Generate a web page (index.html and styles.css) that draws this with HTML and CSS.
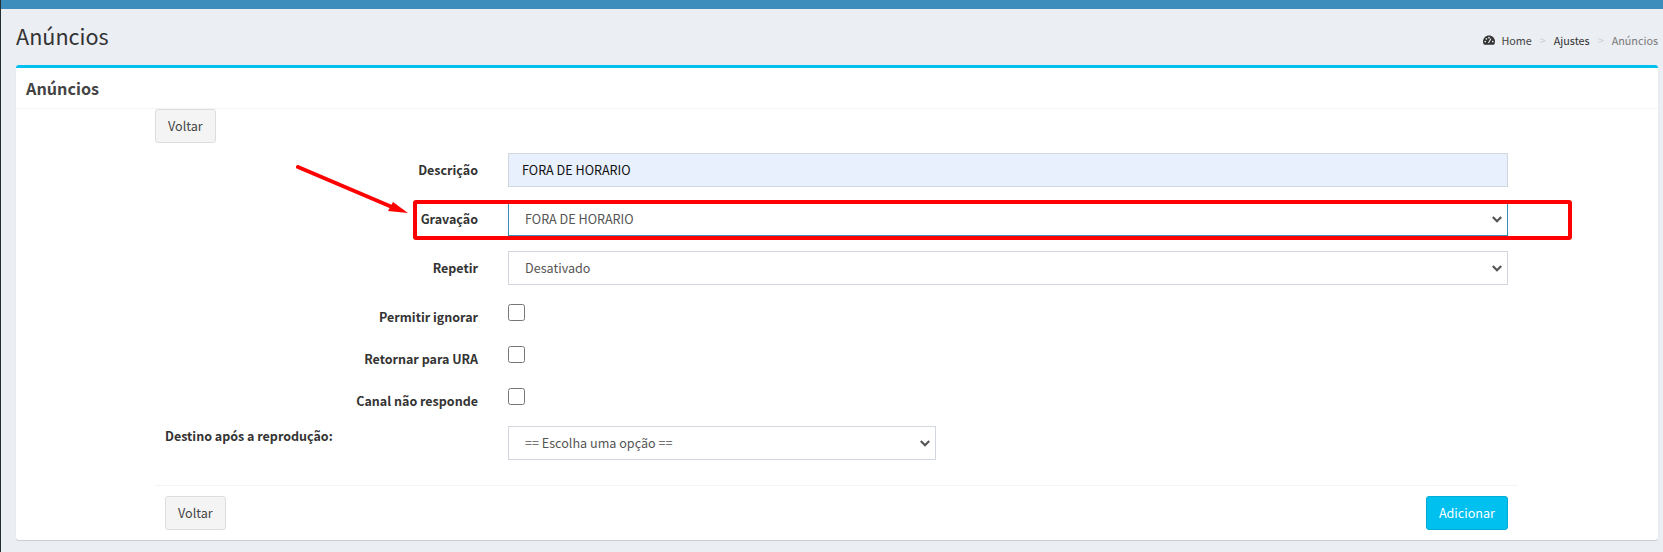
FILE: index.html
```html
<!DOCTYPE html>
<html lang="pt-BR">
<head>
<meta charset="utf-8">
<title>Anúncios</title>
<link rel="stylesheet" href="styles.css">
</head>
<body>
<div class="topbar"></div>
<main class="content">
  <header class="page-head">
    <h1 class="page-title">Anúncios</h1>
    <nav class="crumbs">
      <svg class="gauge" viewBox="0 0 24 20" aria-hidden="true">
        <path class="gauge-dome" d="M12 1C5.400 1 0 6.400 0 13c0 2.200.6 4.300 1.700 6.100.2.300.5.500.9.500h18.800c.4 0 .7-.2.9-.5C23.400 17.300 24 15.200 24 13 24 6.400 18.600 1 12 1z"/>
        <circle class="gauge-mark" cx="4.500" cy="13" r="1.700"/>
        <circle class="gauge-mark" cx="6.800" cy="7.600" r="1.700"/>
        <circle class="gauge-mark" cx="12" cy="5.300" r="1.700"/>
        <circle class="gauge-mark" cx="19.500" cy="13" r="1.700"/>
        <path class="gauge-needle" d="M11 16l5-9"/>
      </svg>
      <a class="crumb">Home</a><span class="sep">&gt;</span><a class="crumb crumb-dark">Ajustes</a><span class="sep">&gt;</span><span class="crumb crumb-active">Anúncios</span>
    </nav>
  </header>

  <section class="box">
    <h2 class="box-title">Anúncios</h2>
    <div class="box-body">
      <button class="btn top-back" type="button">Voltar</button>
      <form class="form">
        <div class="row">
          <label class="label">Descrição</label>
          <input class="control autofilled" type="text" value="FORA DE HORARIO">
        </div>
        <div class="row">
          <label class="label">Gravação</label>
          <select class="control picker focused"><option>FORA DE HORARIO</option></select>
        </div>
        <div class="row">
          <label class="label">Repetir</label>
          <select class="control picker"><option>Desativado</option></select>
        </div>
        <div class="row row-check">
          <label class="label">Permitir ignorar</label>
          <input class="check" type="checkbox">
        </div>
        <div class="row row-check">
          <label class="label">Retornar para URA</label>
          <input class="check" type="checkbox">
        </div>
        <div class="row row-check">
          <label class="label">Canal não responde</label>
          <input class="check" type="checkbox">
        </div>
        <div class="row row-dest">
          <label class="label label-left">Destino após a reprodução:</label>
          <select class="control picker control-short"><option>== Escolha uma opção ==</option></select>
        </div>
        <footer class="form-foot">
          <button class="btn" type="button">Voltar</button>
          <button class="btn btn-primary" type="button">Adicionar</button>
        </footer>
      </form>
    </div>
  </section>
</main>

<div class="mark-box"></div>
<svg class="mark-arrow" viewBox="0 0 120 56" aria-hidden="true">
  <path class="arrow-line" d="M3 2 L97 42"/>
  <path class="arrow-head" d="M113 48 L98 37 L93 46 Z"/>
</svg>
</body>
</html>
```
FILE: styles.css
```css
* { box-sizing: border-box; }

html, body {
  margin: 0;
  height: 552px;
  overflow: hidden;
}

body {
  background: #ebeef3;
  border-left: 1px solid #222d32;
  font-family: "Noto Sans CJK SC", "Noto Sans", sans-serif;
  font-size: 12.6px;
  line-height: 20px;
  color: #333;
  position: relative;
}

.topbar {
  height: 9px;
  margin-left: -1px;
  background: #3c8dbc;
}

.content {
  padding: 0 5px 0 15px;
}

.page-head {
  height: 56px;
  display: flex;
  justify-content: space-between;
  align-items: flex-start;
}

.page-title {
  margin: 12px 0 0;
  font-size: 21.6px;
  line-height: 30px;
  font-weight: 400;
  color: #333;
}

.crumbs {
  margin-top: 21px;
  display: flex;
  align-items: center;
  font-size: 10.8px;
  line-height: 20px;
}

.gauge {
  width: 12px;
  height: 10px;
  margin-right: 6px;
}

.gauge-dome { fill: #333; }
.gauge-mark { fill: #ebeef3; }
.gauge-needle { stroke: #ebeef3; stroke-width: 2.2; fill: none; }

.crumb { color: #444; }
.crumb-dark { color: #333; }
.crumb-active { color: #777; }

.sep {
  padding: 0 8px;
  color: #ccc;
}

.box {
  height: 475px;
  background: #fff;
  border-top: 3px solid #00c0ef;
  border-radius: 3px;
  box-shadow: 0 1px 1px rgba(0, 0, 0, .15);
}

.box-title {
  margin: 0;
  height: 41px;
  padding: 10px 10px 0;
  font-size: 16.2px;
  line-height: 20px;
  font-weight: 700;
  color: #444;
  border-bottom: 1px solid #f4f4f4;
}

.box-body {
  padding-left: 139px;
  width: 1502px;
}

.btn {
  height: 34px;
  padding: 0 12px;
  font: inherit;
  color: #444;
  background: #f4f4f4;
  border: 1px solid #ddd;
  border-radius: 3px;
}

.top-back { display: block; }

.form {
  margin-top: 10px;
}

.row {
  display: grid;
  grid-template-columns: 313px 1000px;
  column-gap: 30px;
  padding: 0 10px;
  margin-bottom: 15px;
}

.label {
  font-size: 12.5px;
  font-weight: 700;
  color: #333;
  text-align: right;
  padding-top: 7px;
}

.label-left {
  text-align: left;
  padding-top: 0;
}

.control {
  height: 34px;
  padding: 5px 12px 7px;
  font: inherit;
  color: #555;
  background: #fff;
  border: 1px solid #d2d6de;
  border-radius: 0;
  outline: 0;
}

.picker {
  appearance: none;
  padding: 6px 12px 6px 16px;
  background: #fff url("data:image/svg+xml,%3Csvg xmlns='http://www.w3.org/2000/svg' width='10' height='7'%3E%3Cpath d='M.8 1 5 5.200 9.200 1' fill='none' stroke='%23555' stroke-width='2.200'/%3E%3C/svg%3E") no-repeat right 5px center;
}

.autofilled {
  padding-left: 13px;
  background: #e8f0fe;
  color: #111;
}

.focused { border-color: #3c8dbc; }

.control-short { width: 428px; }

.row-check { height: 27px; }

.check {
  width: 17px;
  height: 17px;
  margin: 4px 0 0;
}

.row-dest { margin-bottom: 25px; }

.form-foot {
  display: flex;
  justify-content: space-between;
  padding: 10px 10px 0;
  border-top: 1px solid #f4f4f4;
}

.btn-primary {
  color: #fff;
  background: #00c0ef;
  border-color: #00acd6;
}

.mark-box {
  position: absolute;
  left: 412px;
  top: 200px;
  width: 1159px;
  height: 40px;
  border: 4px solid #f00;
  border-radius: 3px;
}

.mark-arrow {
  position: absolute;
  left: 294px;
  top: 165px;
  width: 120px;
  height: 56px;
}

.arrow-line {
  stroke: #f00;
  stroke-width: 4;
  stroke-linecap: round;
  fill: none;
}

.arrow-head { fill: #f00; }
```
